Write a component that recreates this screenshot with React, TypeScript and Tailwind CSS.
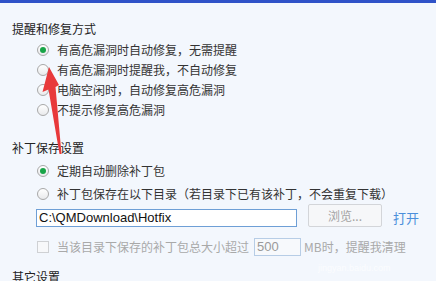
import React from "react";

const cjk = "font-['Noto_Sans_CJK_SC','Noto_Sans',sans-serif]";

function Radio({ checked, label }: { checked?: boolean; label: string }) {
  return (
    <div className="flex h-[20px] items-center pl-[25px]">
      <span className="flex h-[12px] w-[12px] items-center justify-center rounded-full border border-[#a8a8a8] bg-gradient-to-b from-white to-[#e9eaec]">
        {checked && <span className="h-[6px] w-[6px] rounded-full bg-[#18a448]" />}
      </span>
      <span className="ml-[8px] leading-[20px] text-[#333]">{label}</span>
    </div>
  );
}

export default function App() {
  return (
    <div className={`relative h-[281px] w-[436px] overflow-hidden bg-[#f3f7fd] text-[12px] text-[#222] ${cjk}`}>
      <div className="h-[3px] bg-[#2f52c8]" />

      <div className="px-[12px] pt-[16px]">
        <div className="h-[20px] leading-[20px]">提醒和修复方式</div>
        <div className="mt-[1px]">
          <Radio checked label="有高危漏洞时自动修复，无需提醒" />
          <Radio label="有高危漏洞时提醒我，不自动修复" />
          <Radio label="电脑空闲时，自动修复高危漏洞" />
          <Radio label="不提示修复高危漏洞" />
        </div>

        <div className="mt-[18px] h-[20px] leading-[20px]">补丁保存设置</div>
        <div className="mt-[3px] flex flex-col gap-[3px]">
          <Radio checked label="定期自动删除补丁包" />
          <Radio label="补丁包保存在以下目录（若目录下已有该补丁，不会重复下载）" />
        </div>

        <div className="flex items-end pl-[24px]">
          <div className="flex h-[18px] w-[261px] items-center border border-[#6e9fd6] bg-white pl-[2px] font-['Liberation_Sans',sans-serif] text-[13px] text-[#111]">
            C:\QMDownload\Hotfix
          </div>
          <div className="ml-[11px] flex h-[23px] w-[74px] items-center justify-center rounded-[2px] border border-[#d3d5d9] bg-[#f6f7f9] text-[#a3a3a3]">
            浏览...
          </div>
          <div className="ml-[11px] flex h-[18px] items-center text-[13px] text-[#4b8fdb]">打开</div>
        </div>

        <div className="mt-[11px] flex h-[18px] items-center pl-[25px] text-[#a9a9a9]">
          <span className="h-[12px] w-[12px] border border-[#cfd1d4] bg-[#f7f8fa]" />
          <span className="ml-[8px]">当该目录下保存的补丁包总大小超过</span>
          <div className="ml-[5px] flex h-[18px] w-[47px] items-center border border-[#b7cde6] bg-[#f7f9fc] pl-[2px] font-['Liberation_Sans',sans-serif] text-[13px] text-[#9a9a9a]">
            500
          </div>
          <span className="ml-[3px]">MB时，提醒我清理</span>
        </div>

        <div className="mt-[11px] h-[20px] leading-[20px]">其它设置</div>
      </div>

      <div className="absolute left-[318px] top-[262px] font-['Liberation_Sans',sans-serif] text-[9px] text-white/70">
        jingyan.baidu.com
      </div>

      <svg className="absolute left-0 top-0" width="436" height="281" viewBox="0 0 436 281">
        <polygon
          points="49,67 59,85 55.5,87 61.5,154 59.5,154 48.5,89.5 42.5,92"
          fill="#e8393b"
        />
      </svg>
    </div>
  );
}
